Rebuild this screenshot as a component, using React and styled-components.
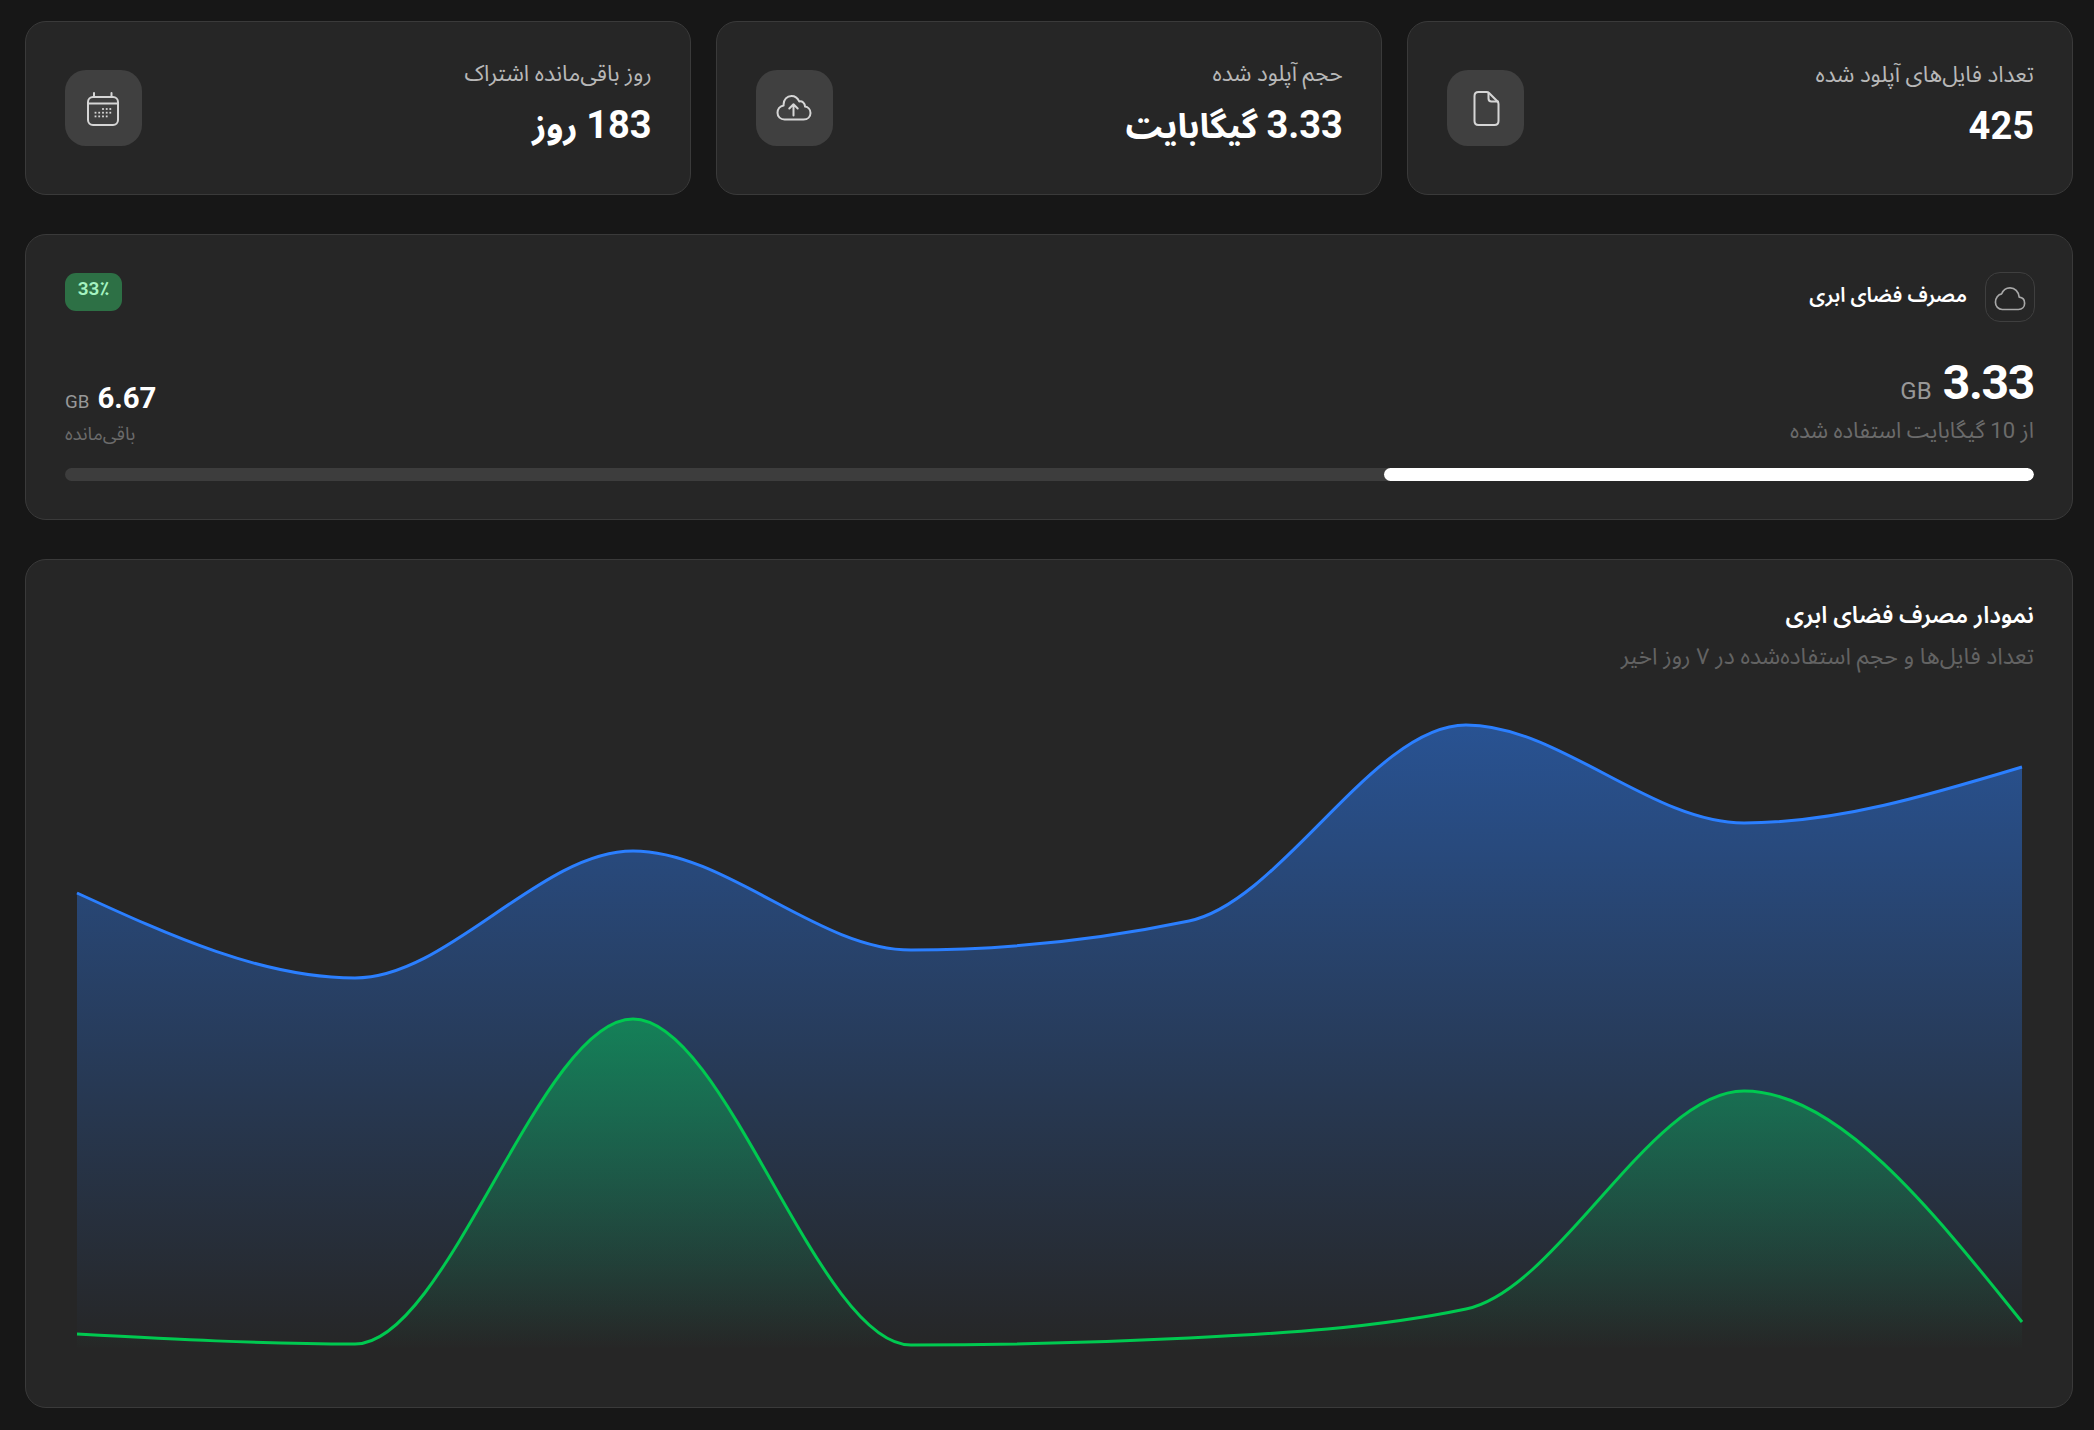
import React from "react";
import styled, { createGlobalStyle } from "styled-components";

const FONT = `Roboto, "Noto Sans Arabic", "Noto Sans", "DejaVu Sans", sans-serif`;

const Global = createGlobalStyle`
  html, body { margin: 0; padding: 0; background: #171717; }
  * { box-sizing: border-box; }
  body { font-family: ${FONT}; color: #fff; }
`;

const Page = styled.div`
  direction: rtl;
  width: 2094px;
  height: 1430px;
  overflow: hidden;
  padding: 21px 21px 22px 25px;
  display: flex;
  flex-direction: column;
  gap: 39px;
  background: #171717;
`;

const Stats = styled.div`
  display: grid;
  grid-template-columns: repeat(3, 1fr);
  gap: 25.5px;
`;

const Card = styled.div`
  height: 174px;
  background: #262626;
  border: 1px solid #3a3a3a;
  border-radius: 21px;
  padding: 0 38px 0 39px;
  display: flex;
  align-items: center;
  justify-content: space-between;
`;

const CardText = styled.div`
  display: flex;
  flex-direction: column;
  gap: 13px;
  padding-bottom: 6px;
`;

const CardTitle = styled.div`
  font-size: 22.5px;
  line-height: 28px;
  color: #b8b8b8;
`;

const CardValue = styled.div`
  font-size: 38px;
  line-height: 50px;
  font-weight: 700;
  color: #fff;
`;

const ValueUnit = styled.span`
  font-size: 34.6px;
`;

const IconBox = styled.div`
  width: 76.5px;
  height: 76px;
  border-radius: 21px;
  background: #404040;
  display: flex;
  align-items: center;
  justify-content: center;
  color: #d6d6d6;
`;

const Panel = styled.section`
  background: #262626;
  border: 1px solid #3a3a3a;
  border-radius: 21px;
  padding: 37px 38px 38px 39px;
  display: flex;
  flex-direction: column;
`;

const PanelHeader = styled.div`
  display: flex;
  justify-content: space-between;
  align-items: flex-start;
  height: 50px;
`;

const PanelTitleWrap = styled.div`
  display: flex;
  align-items: center;
  gap: 18px;
  margin-right: -1px;
`;

const CloudBox = styled.div`
  width: 50px;
  height: 50px;
  border: 1px solid #3f3f3f;
  border-radius: 15px;
  color: #a8a8a8;
`;

const PanelTitle = styled.h2`
  margin: 0 0 4px;
  font-size: 20.2px;
  line-height: 28px;
  font-weight: 600;
  color: #fff;
`;

const Badge = styled.div`
  margin-top: 1px;
  width: 57px;
  height: 38px;
  border-radius: 11px;
  background: #2d7045;
  color: #a5f3c0;
  font-size: 19px;
  line-height: 31px;
  font-weight: 600;
  text-align: center;
`;

const UsageRow = styled.div`
  margin-top: 37px;
  display: flex;
  justify-content: space-between;
  align-items: flex-end;
`;

const UsageBlock = styled.div`
  display: flex;
  flex-direction: column;
`;

const RemainBlock = styled(UsageBlock)`
  align-items: flex-end;
  margin-bottom: -1.5px;
`;

const Amount = styled.div`
  display: flex;
  align-items: baseline;
  gap: ${(p) => p.$gap}px;
`;

const Num = styled.span`
  font-size: ${(p) => p.$size}px;
  line-height: ${(p) => p.$line}px;
  letter-spacing: ${(p) => p.$track || 0}px;
  font-weight: 700;
  color: #fff;
`;

const Unit = styled.span`
  font-size: ${(p) => p.$size}px;
  color: #989898;
`;

const UsageNote = styled.div`
  margin-top: 9px;
  font-size: 22.1px;
  line-height: 28px;
  color: #6b6b6b;
`;

const RemainNote = styled.div`
  margin-top: 6px;
  font-size: 18.7px;
  line-height: 24px;
  color: #6b6b6b;
`;

const Track = styled.div`
  margin-top: 24px;
  height: 13px;
  border-radius: 7px;
  background: #3d3d3d;
  overflow: hidden;
`;

const Fill = styled.div`
  height: 100%;
  border-radius: 7px;
  background: #fff;
`;

const ChartPanel = styled(Panel)`
  flex: 1;
  padding-top: 39px;
`;

const ChartTitle = styled.h2`
  margin: 0;
  font-size: 23.4px;
  line-height: 32px;
  font-weight: 600;
  color: #fff;
`;

const ChartNote = styled.p`
  margin: 10px 0 0;
  font-size: 23.1px;
  line-height: 32px;
  color: #636363;
`;

const ChartSvg = styled.svg`
  display: block;
  margin-top: 27px;
  width: 1968px;
  height: 668px;
  direction: ltr;
`;

const Glyph = ({ children, strokeWidth = 2, viewBox = "0 -2 50 50" }) => (
  <svg width="50" height="50" viewBox={viewBox} fill="none" stroke="currentColor" strokeWidth={strokeWidth} strokeLinejoin="round" strokeLinecap="round">
    {children}
  </svg>
);

const FileGlyph = () => (
  <Glyph>
    <path d="M17.5 7H25.5C26.6 7 27.5 7.4 28.3 8.2L36.3 16.2C37.1 17 37.5 17.9 37.5 19V36C37.5 38.5 36 40 33.5 40H17.5C15 40 13.5 38.5 13.5 36V11C13.5 8.5 15 7 17.5 7Z" />
    <path d="M27.5 8V13.5C27.5 15.5 28.5 16.5 30.5 16.5H37" />
  </Glyph>
);

const CloudUpGlyph = () => (
  <Glyph>
    <path d="M15.5 34.5H34.5C38.8 34.5 41.5 31.6 41.5 28C41.5 24.6 39 22 36 21.6C36 18.2 33.3 15.8 30.2 16.4C28.5 12.8 25.6 11 22.5 11C18 11 14.6 14.6 14.6 19.3V20.4C11 21 8.5 24.2 8.5 27.8C8.5 31.7 11.5 34.5 15.5 34.5Z" />
    <path d="M24.5 30.5V19.5M20.3 23.5L24.5 19.3L28.7 23.5" />
  </Glyph>
);

const calendarDots = [
  [25, 28.7, 32.3],
  [17.5, 21.2, 25, 28.7, 32.3],
  [17.5, 21.2, 25, 28.7],
];

const CalendarGlyph = () => (
  <Glyph>
    <rect x="10" y="12" width="30" height="28" rx="5" />
    <path d="M10.5 18.5H39.5" />
    <path d="M16 8V12M33.5 8V12" />
    {calendarDots.map((row, r) =>
      row.map((x) => (
        <rect key={`${r}-${x}`} x={x - 0.9} y={24 + r * 3.7 - 0.9} width="1.8" height="1.8" fill="currentColor" stroke="none" />
      ))
    )}
  </Glyph>
);

const CloudGlyph = () => (
  <Glyph strokeWidth={1.6} viewBox="0 0 48 48">
    <path d="M17.5 35H33C36.5 35 39 32.5 39 29C39 25.8 36.8 23.5 33.8 23.2C33.3 17.8 29.5 14.2 25 14.2C21 14.2 18.3 16.5 17 20C13.5 20.5 11 24 11 28C11 32 13.8 35 17.5 35Z" />
  </Glyph>
);

const CHART_X = [77, 355, 633, 911, 1189, 1466, 1744, 2022];
const BLUE_Y = [893, 978, 851, 950, 921, 725, 823, 767];
const GREEN_Y = [1334, 1344, 1019, 1345, 1338, 1309, 1091, 1322];
const BASE = 1350;

// Monotone cubic interpolation through the data points (same as d3 curveMonotoneX).
function monotone(xs, ys) {
  const n = xs.length;
  const dx = [], m = [], t = new Array(n);
  for (let i = 0; i < n - 1; i++) {
    dx[i] = xs[i + 1] - xs[i];
    m[i] = (ys[i + 1] - ys[i]) / dx[i];
  }
  for (let i = 1; i < n - 1; i++) {
    const sign = (Math.sign(m[i - 1]) + Math.sign(m[i])) / 2;
    const p = (m[i - 1] * dx[i] + m[i] * dx[i - 1]) / (dx[i - 1] + dx[i]);
    t[i] = sign * Math.min(Math.abs(m[i - 1]), Math.abs(m[i]), 0.5 * Math.abs(p)) * 2;
    if (sign === 0) t[i] = 0;
  }
  t[0] = (3 * m[0] - t[1]) / 2;
  t[n - 1] = (3 * m[n - 2] - t[n - 2]) / 2;
  let d = `M${xs[0]},${ys[0]}`;
  for (let i = 0; i < n - 1; i++) {
    const h = dx[i] / 3;
    d += `C${xs[i] + h},${ys[i] + h * t[i]} ${xs[i + 1] - h},${ys[i + 1] - h * t[i + 1]} ${xs[i + 1]},${ys[i + 1]}`;
  }
  return d;
}

const bluePath = monotone(CHART_X, BLUE_Y);
const greenPath = monotone(CHART_X, GREEN_Y);
const closeArea = `L2022,${BASE}L77,${BASE}Z`;

const stats = [
  { title: "تعداد فایل‌های آپلود شده", value: "425", Icon: FileGlyph },
  { title: "حجم آپلود شده", value: "3.33", unit: "گیگابایت", Icon: CloudUpGlyph },
  { title: "روز باقی‌مانده اشتراک", value: "183", unit: "روز", Icon: CalendarGlyph },
];

export default function App() {
  return (
    <Page>
      <Global />
      <Stats>
        {stats.map(({ title, value, unit, Icon }) => (
          <Card key={title}>
            <CardText>
              <CardTitle>{title}</CardTitle>
              <CardValue>
                {value}
                {unit && <ValueUnit> {unit}</ValueUnit>}
              </CardValue>
            </CardText>
            <IconBox>
              <Icon />
            </IconBox>
          </Card>
        ))}
      </Stats>

      <Panel>
        <PanelHeader>
          <PanelTitleWrap>
            <CloudBox>
              <CloudGlyph />
            </CloudBox>
            <PanelTitle>مصرف فضای ابری</PanelTitle>
          </PanelTitleWrap>
          <Badge>33٪</Badge>
        </PanelHeader>
        <UsageRow>
          <UsageBlock>
            <Amount $gap={11}>
              <Num $size={48} $line={48} $track={-1.3}>3.33</Num>
              <Unit $size={24}>GB</Unit>
            </Amount>
            <UsageNote>از 10 گیگابایت استفاده شده</UsageNote>
          </UsageBlock>
          <RemainBlock>
            <Amount $gap={8}>
              <Num $size={29.4} $line={36}>6.67</Num>
              <Unit $size={18.7}>GB</Unit>
            </Amount>
            <RemainNote>باقی‌مانده</RemainNote>
          </RemainBlock>
        </UsageRow>
        <Track>
          <Fill style={{ width: "33%" }} />
        </Track>
      </Panel>

      <ChartPanel>
        <ChartTitle>نمودار مصرف فضای ابری</ChartTitle>
        <ChartNote>تعداد فایل‌ها و حجم استفاده‌شده در ۷ روز اخیر</ChartNote>
        <ChartSvg viewBox="66 700 1968 668">
          <defs>
            <linearGradient id="blueFade" x1="0" y1="0" x2="0" y2="1">
              <stop offset="0" stopColor="#2b7fff" stopOpacity="0.5" />
              <stop offset="1" stopColor="#2b7fff" stopOpacity="0" />
            </linearGradient>
            <linearGradient id="greenFade" x1="0" y1="0" x2="0" y2="1">
              <stop offset="0" stopColor="#00c950" stopOpacity="0.48" />
              <stop offset="1" stopColor="#00c950" stopOpacity="0" />
            </linearGradient>
          </defs>
          <path d={bluePath + closeArea} fill="url(#blueFade)" />
          <path d={greenPath + closeArea} fill="url(#greenFade)" />
          <path d={bluePath} fill="none" stroke="#2b7fff" strokeWidth="3" />
          <path d={greenPath} fill="none" stroke="#00c950" strokeWidth="3" />
        </ChartSvg>
      </ChartPanel>
    </Page>
  );
}
